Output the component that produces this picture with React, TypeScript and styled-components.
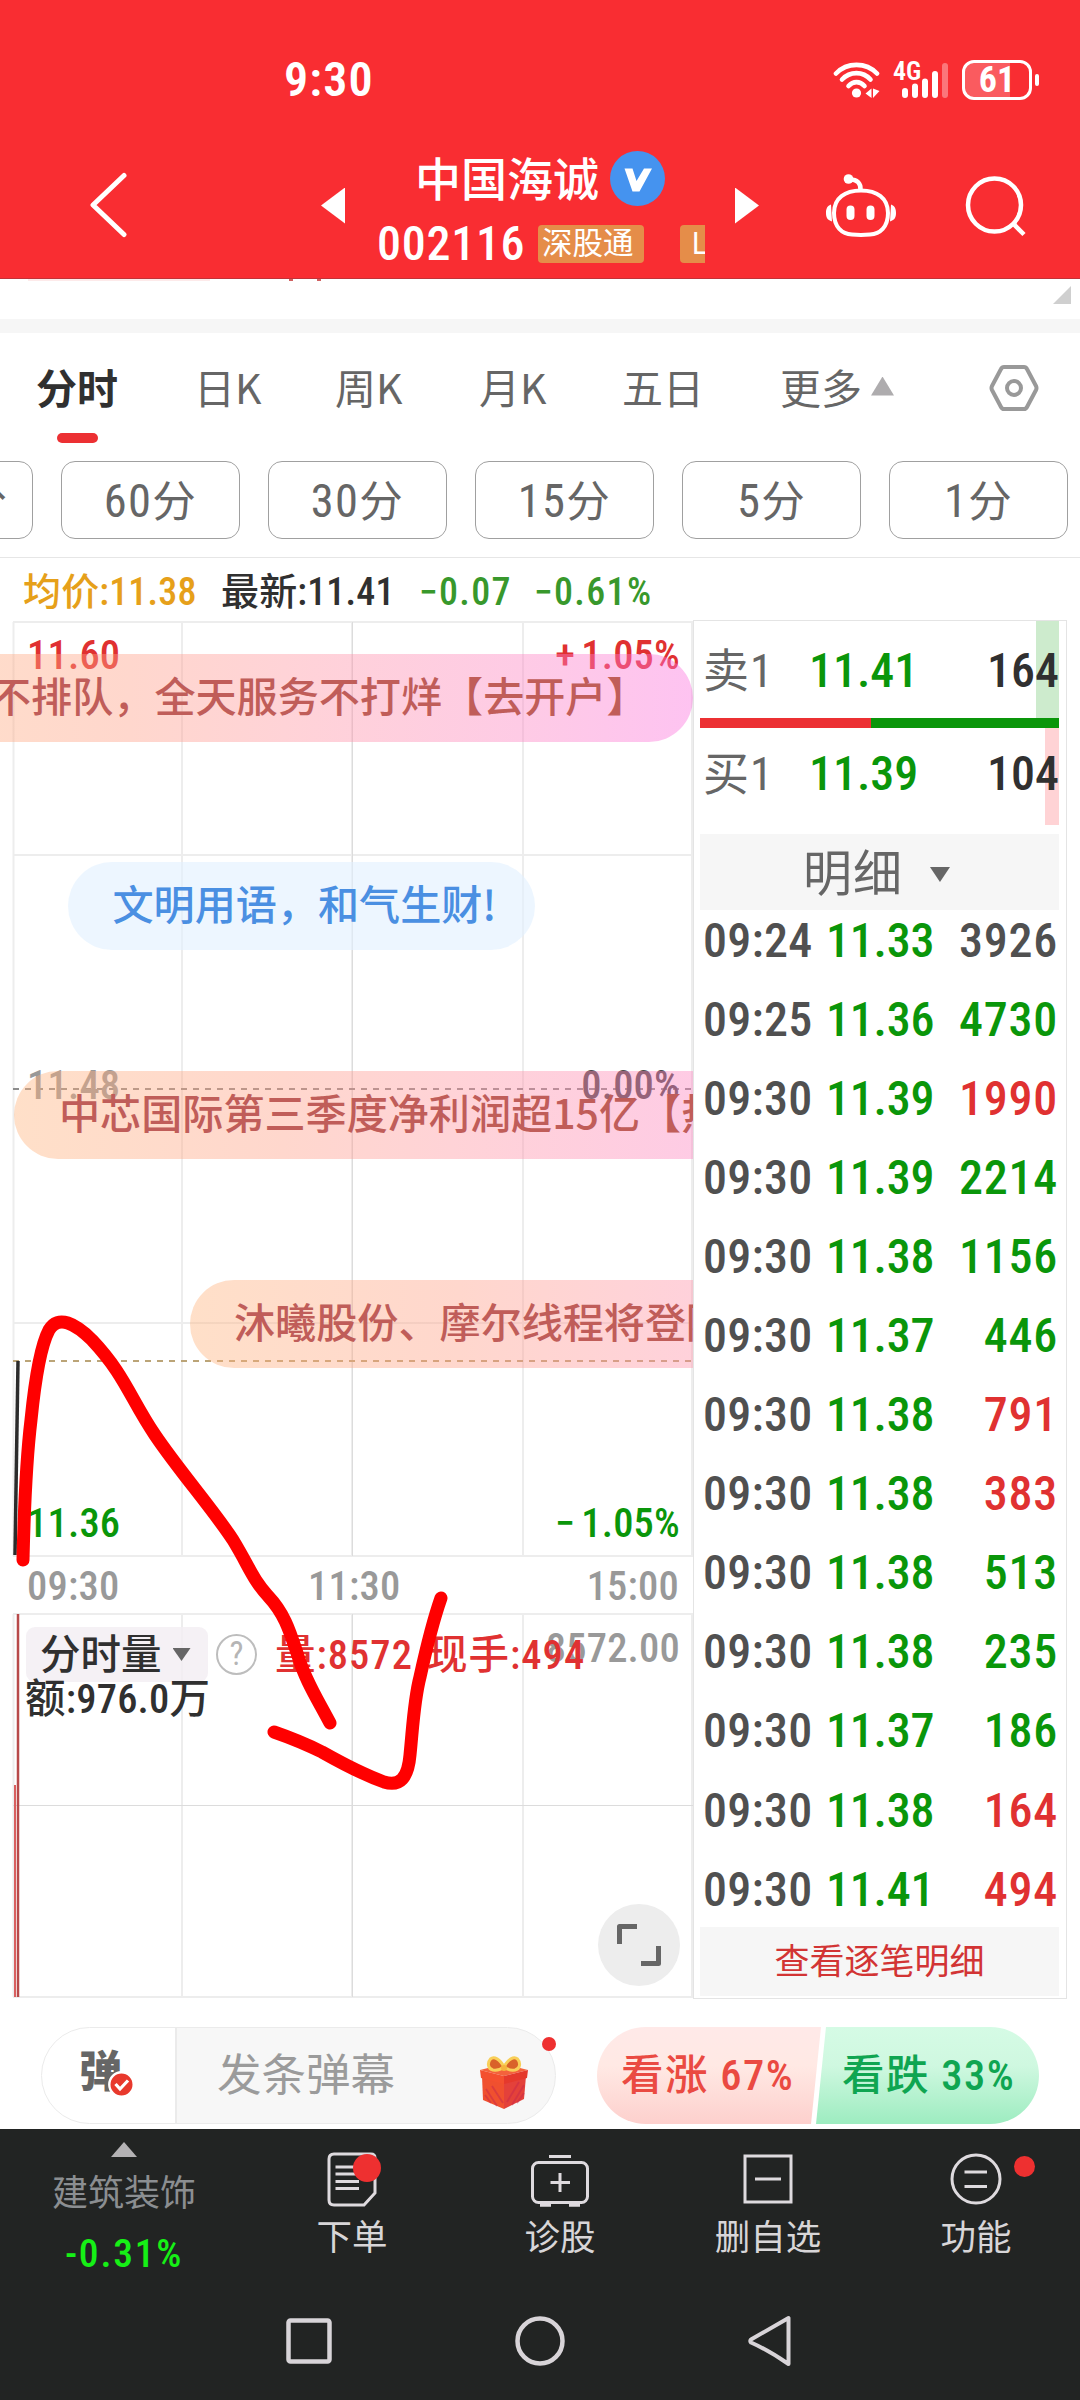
import React from "react";
import styled, { createGlobalStyle } from "styled-components";

const Global = createGlobalStyle`
  * { box-sizing: border-box; }
  body { margin: 0; background: #fff; }
  svg { display: block; flex: none; }
`;

const RED = "#e03131";
const GREEN = "#0a960a";
const DARK = "#303030";

const Screen = styled.div`
  width: 1080px;
  height: 2400px;
  overflow: hidden;
  position: relative;
  display: flex;
  flex-direction: column;
  background: #fff;
  color: ${DARK};
  font-family: "Roboto Condensed", "Noto Sans CJK SC", sans-serif;
  letter-spacing: 0.01em;
  white-space: nowrap;
`;

/* ---------- header ---------- */

const Header = styled.header`
  height: 279px;
  background: #f92d32;
  color: #fff;
  border-bottom: 1px solid #c23238;
`;

const StatusBar = styled.div`
  height: 118px;
  padding: 42px 41px 0 284px;
  display: flex;
  align-items: center;
  justify-content: space-between;
`;

const Clock = styled.span`
  font-size: 48px;
  line-height: 56px;
  font-weight: 600;
  letter-spacing: 0.025em;
`;

const StatusIcons = styled.div`
  display: flex;
  align-items: center;
`;

const Network = styled.div`
  position: relative;
  width: 56px;
  height: 38px;
  margin-left: 13px;
`;

const NetworkLabel = styled.span`
  position: absolute;
  left: -1px;
  top: -3px;
  font-size: 26px;
  line-height: 26px;
  font-weight: 600;
  letter-spacing: 0;
`;

const Battery = styled.div`
  width: 70px;
  height: 40px;
  margin-left: 12px;
  border: 3px solid #fff;
  border-radius: 12px;
  display: flex;
  align-items: center;
  justify-content: center;
  font-size: 36px;
  line-height: 34px;
  font-weight: 700;
  background: linear-gradient(90deg, rgba(255, 255, 255, 0.22) 70%, transparent 70%);
`;

const BatteryTip = styled.div`
  width: 4px;
  height: 12px;
  margin-left: 3px;
  border-radius: 2px;
  background: #fff;
`;

const TitleBar = styled.div`
  height: 160px;
  padding: 15px 0 0 88px;
  display: flex;
  align-items: center;
`;

const Arrow = styled.div<{ $dir: "left" | "right"; $gap?: number }>`
  width: 24px;
  height: 36px;
  margin-left: ${(p) => p.$gap ?? 0}px;
  background: #fff;
  clip-path: ${(p) => (p.$dir === "left" ? "polygon(0 50%, 100% 0, 100% 100%)" : "polygon(0 0, 100% 50%, 0 100%)")};
`;

const Title = styled.div`
  width: 390px;
  margin-top: 11px;
`;

const NameRow = styled.div`
  height: 58px;
  padding-left: 70px;
  display: flex;
  align-items: center;
  gap: 11px;
  font-size: 46px;
  font-weight: 500;
  letter-spacing: 0;
`;

const Name = styled.span`
  margin-top: -6px;
`;

const CodeRow = styled.div`
  height: 58px;
  width: 328px;
  margin: 7px 0 0 32px;
  overflow: hidden;
  display: flex;
  align-items: center;
`;

const Code = styled.span`
  flex: none;
  width: 161px;
  font-size: 48px;
  line-height: 58px;
  font-weight: 500;
  letter-spacing: 0.015em;
`;

const Badge = styled.span<{ $w: number; $gap?: number; $pad: number }>`
  flex: none;
  width: ${(p) => p.$w}px;
  height: 38px;
  margin-left: ${(p) => p.$gap ?? 0}px;
  padding-left: ${(p) => p.$pad}px;
  border-radius: 4px;
  background: #e58d49;
  font-size: 30.5px;
  line-height: 37px;
  letter-spacing: 0;
`;

const HeaderIcon = styled.div<{ $gap: number }>`
  margin-left: ${(p) => p.$gap}px;
`;

/* ---------- tabs ---------- */

const Peek = styled.div`
  height: 54px;
  border-bottom: 14px solid #f6f6f6;
  display: flex;
  justify-content: flex-end;
  padding: 7px 9px 0 0;
  background:
    linear-gradient(#d06060, #d06060) no-repeat 289px 0 / 4px 2px,
    linear-gradient(#d06060, #d06060) no-repeat 317px 0 / 4px 2px,
    linear-gradient(#fdeaea, #fdeaea) no-repeat 28px 0 / 182px 2px;
`;

const Corner = styled.div`
  width: 18px;
  height: 18px;
  background: #cfcfcf;
  clip-path: polygon(100% 0, 100% 100%, 0 100%);
`;

const Tabs = styled.nav`
  height: 112px;
  padding-left: 36px;
  display: flex;
  color: #666;
  font-family: "Noto Sans CJK SC", sans-serif;
  font-size: 41px;
  line-height: 104px;
  letter-spacing: 0;
`;

const Tab = styled.div<{ $w: number; $active?: boolean }>`
  width: ${(p) => p.$w}px;
  height: 112px;
  padding-bottom: 6px;
  position: relative;
  display: flex;
  align-items: center;
  gap: 9px;
  ${(p) => p.$active && `color: ${DARK}; font-weight: 700;`}
`;

const SettingsTab = styled(Tab)`
  padding-bottom: 2px;
`;

const Underline = styled.i`
  position: absolute;
  left: 21px;
  bottom: 2px;
  width: 41px;
  height: 10px;
  border-radius: 5px;
  background: #ec3033;
`;

const Caret = styled.i<{ $w: number; $h: number; $c: string; $up?: boolean }>`
  flex: none;
  width: ${(p) => p.$w}px;
  height: ${(p) => p.$h}px;
  background: ${(p) => p.$c};
  clip-path: ${(p) => (p.$up ? "polygon(50% 0, 100% 100%, 0 100%)" : "polygon(0 0, 100% 0, 50% 100%)")};
`;

const Chips = styled.div`
  height: 112px;
  margin-left: -146px;
  padding-top: 16px;
  display: flex;
  gap: 28px;
`;

const Chip = styled.div`
  flex: none;
  width: 179px;
  height: 78px;
  border: 1.5px solid #a0a0a0;
  border-radius: 14px;
  text-align: center;
  font-size: 43.5px;
  line-height: 79px;
  color: #666;
  letter-spacing: 0.03em;

  &:first-child {
    padding-left: 12px;
  }
`;

const ChipNumber = styled.span`
  font-size: 46.5px;
`;

const Quote = styled.div`
  height: 63px;
  border-top: 1px solid #e6e6e6;
  padding: 5px 23px 0;
  display: flex;
  align-items: center;
  font-size: 38px;
  font-weight: 500;
  line-height: 60px;
`;

const QuoteItem = styled.span<{ $c: string; $w: number; $spread?: boolean }>`
  width: ${(p) => p.$w}px;
  color: ${(p) => p.$c};
  ${(p) => p.$spread && "letter-spacing: 0.035em;"}
`;

/* ---------- market area ---------- */

const Market = styled.main`
  height: 1379px;
  display: flex;
  font-weight: 500;
`;

const ChartColumn = styled.section`
  position: relative;
  width: 693px;
  height: 1379px;
  overflow: hidden;
`;

const Plot = styled.svg`
  position: absolute;
  inset: 0;
`;

const Label = styled.span<{ $y: number; $c: string; $x?: number; $r?: number }>`
  position: absolute;
  top: ${(p) => p.$y - 25}px;
  ${(p) => (p.$r !== undefined ? `right: ${p.$r}px;` : `left: ${p.$x}px;`)}
  font-size: 40.5px;
  line-height: 50px;
  letter-spacing: 0.005em;
  color: ${(p) => p.$c};
`;

const Sign = styled.span`
  margin-right: 6px;
`;

const Bullet = styled.div<{ $x: number; $y: number; $w: number; $pad: number; $blue?: boolean }>`
  position: absolute;
  left: ${(p) => p.$x}px;
  top: ${(p) => p.$y}px;
  width: ${(p) => p.$w}px;
  height: 88px;
  padding-left: ${(p) => p.$pad}px;
  border-radius: 44px;
  font-family: "Noto Sans CJK SC", sans-serif;
  font-size: 41.1px;
  line-height: 81px;
  letter-spacing: 0;
  color: ${(p) => (p.$blue ? "#4a8fe2" : "#c05d59")};
  background: ${(p) =>
    p.$blue
      ? "rgba(225, 240, 255, 0.6)"
      : "linear-gradient(90deg, rgba(255,180,125,.42) 0%, rgba(255,160,135,.42) 30%, rgba(255,150,160,.42) 50%, rgba(253,130,195,.42) 80%, rgba(252,112,222,.42) 100%)"};
`;

const VolumeBar = styled.div`
  position: absolute;
  left: 26px;
  top: 1007px;
  display: flex;
  align-items: center;
  height: 55px;
  font-size: 40.5px;
  line-height: 50px;
`;

const Selector = styled.div`
  width: 182px;
  height: 55px;
  padding-left: 14px;
  border-radius: 9px;
  display: flex;
  align-items: center;
  gap: 11px;
  background: rgba(243, 238, 243, 0.8);
  letter-spacing: 0;
`;

const Help = styled.div`
  width: 41px;
  height: 41px;
  margin: 0 18px 0 8px;
  border: 2.5px solid #bdbdbd;
  border-radius: 50%;
  text-align: center;
  font-size: 33px;
  font-weight: 400;
  line-height: 36px;
  color: #b5b5b5;
`;

const VolumeValue = styled.span<{ $w: number }>`
  width: ${(p) => p.$w}px;
  letter-spacing: 0.025em;
  color: ${RED};
`;

const Expand = styled.div`
  position: absolute;
  left: 598px;
  top: 1284px;
  width: 82px;
  height: 82px;
  border-radius: 50%;
  background: #ededed;
  display: grid;
  place-items: center;
`;

const Book = styled.aside`
  width: 374px;
  height: 1379px;
  padding: 0 7px 0 6px;
  border: 1px solid #e4e4e4;
  display: flex;
  flex-direction: column;
`;

const Level = styled.div<{ $side: "sell" | "buy" }>`
  height: ${(p) => (p.$side === "sell" ? 97 : 106)}px;
  padding: ${(p) => (p.$side === "sell" ? "2px 0 0 3px" : "0 0 14px 3px")};
  display: flex;
  align-items: center;
  font-size: 48px;
  line-height: 60px;
  letter-spacing: 0;
  background: linear-gradient(
      ${(p) => (p.$side === "sell" ? "#cdebcd, #cdebcd" : "#ffd3d5, #ffd3d5")}
    )
    no-repeat right top / ${(p) => (p.$side === "sell" ? "23px 100%" : "14px 97px")};
`;

const LevelName = styled.span`
  width: 106px;
  color: #666;
  font-size: 46px;
  font-weight: 400;
  letter-spacing: 0.02em;
`;

const LevelPrice = styled.span`
  flex: 1;
  color: ${GREEN};
`;

const Ratio = styled.div`
  height: 10px;
  background: linear-gradient(90deg, #ec3033 47.5%, ${GREEN} 47.5%);
`;

const DetailHead = styled.div`
  height: 76px;
  padding: 5px 0 0 103px;
  display: flex;
  align-items: center;
  gap: 27px;
  background: #f6f6f6;
  color: #666;
  font-size: 49px;
  font-weight: 400;
  line-height: 70px;
  letter-spacing: 0.02em;
`;

const Ticks = styled.div`
  height: 1026px;
  margin-top: -9px;
  flex: none;
`;

const Tick = styled.div`
  height: 79.05px;
  padding: 0 1px 0 3px;
  display: flex;
  align-items: center;
  font-size: 48px;
  line-height: 79px;
  letter-spacing: 0.005em;
`;

const TickTime = styled.span`
  width: 123px;
  color: #505050;
`;

const TickPrice = styled.span`
  letter-spacing: -0.005em;
  color: ${GREEN};
`;

const TickVolume = styled.span<{ $c: string }>`
  flex: 1;
  text-align: right;
  letter-spacing: 0.015em;
  color: ${(p) => p.$c};
`;

const AllTicks = styled.div`
  height: 69px;
  background: #f6f6f6;
  color: #d23434;
  text-align: center;
  font-size: 35px;
  font-weight: 400;
  line-height: 71px;
  letter-spacing: 0;
`;

/* ---------- comment bar ---------- */

const CommentBar = styled.div`
  height: 130px;
  padding: 28px 41px 0;
  display: flex;
  justify-content: space-between;
`;

const Compose = styled.div`
  position: relative;
  width: 515px;
  height: 97px;
  border: 1px solid #ebebeb;
  border-radius: 49px;
  background: linear-gradient(90deg, #fff 133px, #ebebeb 133px, #ebebeb 135px, #f7f7f7 135px);
  display: flex;
  align-items: center;
  font-size: 44.5px;
  color: #9b9b9b;
  letter-spacing: 0;
`;

const Toggle = styled.div`
  position: relative;
  width: 135px;
  padding-left: 37px;
  margin-top: -7px;
  font-size: 43px;
  line-height: 60px;
  font-weight: 900;
  color: #666;
`;

const CheckMark = styled.svg`
  position: absolute;
  left: 66px;
  top: 29px;
`;

const Placeholder = styled.span`
  width: 261px;
  padding-left: 40px;
  line-height: 90px;
`;

const Gift = styled.svg`
  margin: 14px 0 0 41px;
`;

const Dot = styled.i<{ $x: number; $y: number; $s: number }>`
  position: absolute;
  left: ${(p) => p.$x}px;
  top: ${(p) => p.$y}px;
  width: ${(p) => p.$s}px;
  height: ${(p) => p.$s}px;
  border-radius: 50%;
  background: #ee3030;
`;

const Votes = styled.div`
  width: 442px;
  height: 97px;
  border-radius: 49px;
  overflow: hidden;
  display: flex;
  font-size: 42.5px;
  font-weight: 500;
  line-height: 97px;
  letter-spacing: 0.035em;
`;

const Up = styled.div`
  width: 224px;
  padding-left: 24px;
  color: #ea4a42;
  background: linear-gradient(#ffe9e8, #ffe9e4 40%, #fdd0cd);
  clip-path: polygon(0 0, 100% 0, 214px 100%, 0 100%);
`;

const Down = styled.div`
  width: 223px;
  margin-left: -5px;
  padding-left: 26px;
  color: #0fa551;
  background: linear-gradient(#d5fbe5, #cff8e0 40%, #9decc0);
  clip-path: polygon(10px 0, 100% 0, 100% 100%, 0 100%);
`;

/* ---------- bottom ---------- */

const Footer = styled.footer`
  flex: 1;
  background: #222423;
  color: #d8d6d8;
`;

const Actions = styled.div`
  height: 142px;
  display: flex;
`;

const Sector = styled.div`
  width: 248px;
  padding-top: 13px;
  display: flex;
  flex-direction: column;
  align-items: center;
  font-size: 36px;
  line-height: 60px;
  color: #8b8e91;
  letter-spacing: 0;
`;

const SectorName = styled.span`
  margin-top: 7px;
`;

const SectorChange = styled.span`
  font-size: 39.5px;
  font-weight: 500;
  color: #16f016;
  letter-spacing: 0.045em;
`;

const Action = styled.div`
  position: relative;
  width: 208px;
  padding-top: 20px;
  display: flex;
  flex-direction: column;
  align-items: center;
  font-size: 35.5px;
  line-height: 58px;
  letter-spacing: 0;
`;

const SystemNav = styled.div`
  height: 129px;
  padding: 40px 286px 0;
  display: flex;
  justify-content: space-between;
`;

const Scribble = styled.svg`
  position: absolute;
  left: 0;
  top: 1300px;
  pointer-events: none;
`;

const ticks: [string, string, string, string][] = [
  ["09:24", "11.33", "3926", "#505050"],
  ["09:25", "11.36", "4730", GREEN],
  ["09:30", "11.39", "1990", RED],
  ["09:30", "11.39", "2214", GREEN],
  ["09:30", "11.38", "1156", GREEN],
  ["09:30", "11.37", "446", GREEN],
  ["09:30", "11.38", "791", RED],
  ["09:30", "11.38", "383", RED],
  ["09:30", "11.38", "513", GREEN],
  ["09:30", "11.38", "235", GREEN],
  ["09:30", "11.37", "186", GREEN],
  ["09:30", "11.38", "164", RED],
  ["09:30", "11.41", "494", RED],
];

const columns = [13.5, 182, 352, 523, 692];

function WifiIcon() {
  return (
    <svg width="48" height="38" viewBox="0 0 48 38" fill="none" stroke="#fff" strokeWidth="4.6" strokeLinecap="round">
      <path d="M3 12.5C14 1 33 1 44 12.5" />
      <path d="M9 18.5C17 10 30 10 37.5 18.5" />
      <path d="M15.5 25C20 19.8 27 19.8 31.5 25" />
      <circle cx="23.5" cy="32" r="4.6" fill="#fff" stroke="none" />
      <path d="M38.5 27.5v9.5l-6-4.500zM40 27.5l6.500 2.500-6.500 7z" fill="#fff" stroke="none" />
    </svg>
  );
}

export default function App() {
  return (
    <Screen>
      <Global />
      <Header>
        <StatusBar>
          <Clock>9:30</Clock>
          <StatusIcons>
            <WifiIcon />
            <Network>
              <NetworkLabel>4G</NetworkLabel>
              <svg width="56" height="38" stroke="#fff" strokeWidth="6" strokeLinecap="round">
                <path d="M11 30V34M21 25.5V34M31 20.5V34M41 13V34" />
                <path d="M51 5V34" opacity="0.35" />
              </svg>
            </Network>
            <Battery>61</Battery>
            <BatteryTip />
          </StatusIcons>
        </StatusBar>
        <TitleBar>
          <svg width="42" height="68" viewBox="0 0 42 68" fill="none" stroke="#fff" strokeWidth="5" strokeLinecap="round" strokeLinejoin="round">
            <path d="M36 3.500L5 33L36 62.500" />
          </svg>
          <Arrow $dir="left" $gap={191} />
          <Title>
            <NameRow>
              <Name>中国海诚</Name>
              <svg width="55" height="55" viewBox="0 0 55 55">
                <circle cx="27.5" cy="27.5" r="27.5" fill="#4593ef" />
                <path d="M14.500 17.500H22.500L26.500 30L34 17.500H42L29.500 40.500H22.500Z" fill="#fff" />
              </svg>
            </NameRow>
            <CodeRow>
              <Code>002116</Code>
              <Badge $w={106} $pad={4}>深股通</Badge>
              <Badge $w={60} $gap={36} $pad={12}>L</Badge>
            </CodeRow>
          </Title>
          <Arrow $dir="right" />
          <HeaderIcon $gap={65}>
            <svg width="74" height="66" viewBox="0 0 74 66" fill="none" stroke="#fff" strokeWidth="4">
              <path d="M37 17.500C53 17.500 64 25 64 40C64 54 56 61 46 61.500C40 62 34 62 28 61.500C18 61 10 54 10 40C10 25 21 17.500 37 17.500Z" />
              <path d="M36.500 17C37 10 33 6.500 26 6.500" strokeWidth="4.5" />
              <circle cx="24.5" cy="6" r="4.8" fill="#fff" stroke="none" />
              <path d="M7 31.500C2.500 33 2 37 2 40C2 44 3 47 8 48.500ZM67 31.500C71.500 33 72 37 72 40C72 44 71 47 66 48.500Z" fill="#fff" stroke="none" />
              <path d="M26.500 36.500V43M46.500 36.500V43" strokeWidth="8" strokeLinecap="round" />
            </svg>
          </HeaderIcon>
          <HeaderIcon $gap={67}>
            <svg width="62" height="62" viewBox="0 0 62 62" fill="none" stroke="#fff" strokeWidth="4.5">
              <circle cx="29.5" cy="30" r="26.5" />
              <path d="M48.500 49L59 59.500" />
            </svg>
          </HeaderIcon>
        </TitleBar>
      </Header>

      <Peek>
        <Corner />
      </Peek>

      <Tabs>
        <Tab $w={158} $active>
          分时
          <Underline />
        </Tab>
        <Tab $w={141}>日K</Tab>
        <Tab $w={144}>周K</Tab>
        <Tab $w={143}>月K</Tab>
        <Tab $w={158}>五日</Tab>
        <Tab $w={209}>
          更多
          <Caret $w={23} $h={19} $c="#aeacae" $up />
        </Tab>
        <SettingsTab $w={60}>
          <svg width="50" height="48" viewBox="0 0 50 48" fill="none" stroke="#999" strokeWidth="4">
            <path d="M15 3H35Q37 3 38 5L47 22Q48 24 47 26L38 43Q37 45 35 45H15Q13 45 12 43L3 26Q2 24 3 22L12 5Q13 3 15 3Z" />
            <circle cx="25" cy="24" r="7" />
          </svg>
        </SettingsTab>
      </Tabs>

      <Chips>
        {["120", "60", "30", "15", "5", "1"].map((n) => (
          <Chip key={n}>
            <ChipNumber>{n}</ChipNumber>分
          </Chip>
        ))}
      </Chips>

      <Quote>
        <QuoteItem $c="#e6a01a" $w={198}>均价:11.38</QuoteItem>
        <QuoteItem $c={DARK} $w={198}>最新:11.41</QuoteItem>
        <QuoteItem $c="#38982c" $w={115} $spread>−0.07</QuoteItem>
        <QuoteItem $c="#38982c" $w={130} $spread>−0.61%</QuoteItem>
      </Quote>

      <Market>
        <ChartColumn>
          <Plot width="693" height="1379">
            <g stroke="#ededed" strokeWidth="2">
              {[2, 235, 703, 936, 994, 1377].map((y) => (
                <path key={y} d={`M13 ${y}H693`} />
              ))}
              {columns.map((x) => (
                <path key={x} d={`M${x} 2V936M${x} 994V1377`} />
              ))}
            </g>
            <path d="M13 1185.500H693M352.500 2V936M352.500 994V1377" stroke="#dcdcdc" />
            <path d="M13 469H693" stroke="#8c8c8c" strokeWidth="2" strokeDasharray="6 6" />
            <path d="M13 741H693" stroke="#bba477" strokeWidth="2" strokeDasharray="6 6" />
            <path d="M18 741L15 935" stroke="#2b2b2b" strokeWidth="3.5" />
            <path d="M18 994V1377" stroke="#b84a4a" strokeWidth="2.5" />
            <path d="M15 1165V1377" stroke="#d96060" strokeWidth="2" />
          </Plot>

          <Label $x={27} $y={35} $c={RED}>11.60</Label>
          <Label $r={13} $y={35} $c={RED}><Sign>+</Sign>1.05%</Label>
          <Label $x={27} $y={465} $c="#999">11.48</Label>
          <Label $r={13} $y={465} $c="#4c484c">0.00%</Label>
          <Label $x={27} $y={903} $c={GREEN}>11.36</Label>
          <Label $r={13} $y={903} $c={GREEN}><Sign>−</Sign>1.05%</Label>
          <Label $x={27} $y={966} $c="#999">09:30</Label>
          <Label $x={308} $y={966} $c="#999">11:30</Label>
          <Label $r={14} $y={966} $c="#999">15:00</Label>
          <Label $r={13} $y={1028} $c="#999">8572.00</Label>

          <Bullet $x={-120} $y={34} $w={813} $pad={110}>不排队，全天服务不打烊【去开户】</Bullet>
          <Bullet $x={67.5} $y={242} $w={467} $pad={45} $blue>文明用语，和气生财!</Bullet>
          <Bullet $x={14} $y={451} $w={880} $pad={45}>中芯国际第三季度净利润超15亿【热</Bullet>
          <Bullet $x={190} $y={660} $w={880} $pad={44}>沐曦股份、摩尔线程将登陆</Bullet>

          <VolumeBar>
            <Selector>
              分时量
              <Caret $w={18} $h={13} $c="#666" />
            </Selector>
            <Help>?</Help>
            <VolumeValue $w={152}>量:8572</VolumeValue>
            <VolumeValue $w={165}>现手:494</VolumeValue>
          </VolumeBar>
          <Label $x={25} $y={1079} $c={DARK}>额:976.0万</Label>

          <Expand>
            <svg width="46" height="46" viewBox="0 0 46 46" fill="none" stroke="#666" strokeWidth="5" strokeLinejoin="round">
              <path d="M3.500 22V4.500H21M42.500 24V41.500H25" />
            </svg>
          </Expand>
        </ChartColumn>

        <Book>
          <Level $side="sell">
            <LevelName>卖1</LevelName>
            <LevelPrice>11.41</LevelPrice>
            164
          </Level>
          <Ratio />
          <Level $side="buy">
            <LevelName>买1</LevelName>
            <LevelPrice>11.39</LevelPrice>
            104
          </Level>
          <DetailHead>
            明细
            <Caret $w={20} $h={15} $c="#666" />
          </DetailHead>
          <Ticks>
            {ticks.map(([time, price, volume, color], i) => (
              <Tick key={i}>
                <TickTime>{time}</TickTime>
                <TickPrice>{price}</TickPrice>
                <TickVolume $c={color}>{volume}</TickVolume>
              </Tick>
            ))}
          </Ticks>
          <AllTicks>查看逐笔明细</AllTicks>
        </Book>
      </Market>

      <CommentBar>
        <Compose>
          <Toggle>
            弹
            <CheckMark width="27" height="27" viewBox="0 0 27 27">
              <circle cx="13.5" cy="13.5" r="12.2" fill="#e8392d" stroke="#fff" strokeWidth="2.4" />
              <path d="M7.500 13L12 18L20 9.500" fill="none" stroke="#fff" strokeWidth="3.2" />
            </CheckMark>
          </Toggle>
          <Placeholder>发条弹幕</Placeholder>
          <Gift width="50" height="54" viewBox="0 0 50 54">
            <path d="M3 20L25 25V53L4 44Z" fill="#f0502f" />
            <path d="M25 25L47 20L45 43L25 53Z" fill="#e4413a" />
            <path d="M7 33L18 50M6 39L12 47M13 30L24 47M40 26L28 46M45 29L33 49M45 37L38 47" stroke="#c9294a" strokeWidth="1.8" opacity="0.5" />
            <path d="M1 14L25 8L49 14L25 20Z" fill="#f4623c" />
            <path d="M1 14L25 20V28L2 22Z" fill="#f4502f" />
            <path d="M49 14L25 20V28L48 22Z" fill="#e5392c" />
            <g fill="#d9622a" stroke="#f8cf58" strokeWidth="3">
              <path d="M25 11C21 3 15 0 11.500 3C8 7 9 13 14 14C18 14.500 22 13.500 25 11Z" />
              <path d="M25 11C29 3 35 0 38.500 3C42 7 41 13 36 14C32 14.500 28 13.500 25 11Z" />
            </g>
            <circle cx="25" cy="12" r="3" fill="#f5b53d" />
          </Gift>
          <Dot $x={500} $y={9} $s={14} />
        </Compose>
        <Votes>
          <Up>看涨 67%</Up>
          <Down>看跌 33%</Down>
        </Votes>
      </CommentBar>

      <Footer>
        <Actions>
          <Sector>
            <Caret $w={26} $h={15} $c="#b4b2b4" $up />
            <SectorName>建筑装饰</SectorName>
            <SectorChange>-0.31%</SectorChange>
          </Sector>
          <Action>
            <svg width="54" height="60" viewBox="0 0 54 60" fill="none" stroke="#dedade" strokeWidth="3">
              <path d="M9 5H46Q50 5 50 9V44L39 56H9Q4 56 4 51V10Q4 5 9 5Z" />
              <path d="M10.500 18H34M10.500 25H34M10.500 32.500H34M10.500 39.500H34" />
            </svg>
            下单
            <Dot $x={105} $y={25} $s={28} />
          </Action>
          <Action>
            <svg width="60" height="60" viewBox="0 0 60 60" fill="none" stroke="#dedade" strokeWidth="3">
              <rect x="2.5" y="13.5" width="55" height="40" rx="6" />
              <path d="M19 7.500H41M20.500 33.500H40M30 24V43" />
              <path d="M10 56H21M39 56H50" strokeWidth="3.5" />
            </svg>
            诊股
          </Action>
          <Action>
            <svg width="54" height="60" viewBox="0 0 54 60" fill="none" stroke="#dedade" strokeWidth="3">
              <path d="M4 7H50V53H4ZM14 30H40" />
            </svg>
            删自选
          </Action>
          <Action>
            <svg width="60" height="60" viewBox="0 0 60 60" fill="none" stroke="#dedade" strokeWidth="3">
              <circle cx="30" cy="30" r="24" />
              <path d="M18.500 23H41M18.500 37.500H41" />
            </svg>
            功能
            <Dot $x={142} $y={27} $s={21} />
          </Action>
        </Actions>
        <SystemNav>
          <svg width="46" height="60" viewBox="0 0 46 60" fill="none" stroke="#d8d4d8" strokeWidth="4.5">
            <rect x="2.5" y="9.5" width="41" height="41" rx="2" />
          </svg>
          <svg width="50" height="60" viewBox="0 0 50 60" fill="none" stroke="#d8d4d8" strokeWidth="4.5">
            <circle cx="25" cy="30" r="22.5" />
          </svg>
          <svg width="46" height="60" viewBox="0 0 46 60" fill="none" stroke="#d8d4d8" strokeWidth="4" strokeLinejoin="round">
            <path d="M40.500 7V53Q20 39 3 31.500Q1.500 30 3 28.500Z" />
          </svg>
        </SystemNav>
      </Footer>

      <Scribble width="470" height="520" viewBox="0 1300 470 520" fill="none" stroke="#ff0000" strokeWidth="13" strokeLinecap="round" strokeLinejoin="round">
        <path d="M23 1560C24 1520 25 1470 31 1420C35 1380 41 1345 49 1330C58 1314 76 1324 92 1340C125 1375 130 1398 155 1435C180 1472 212 1508 233 1540C250 1568 252 1578 268 1596C285 1614 290 1632 298 1656C305 1680 318 1700 330 1723" />
        <path d="M274 1732Q300 1741 322 1752C345 1765 362 1774 384 1782C400 1787 408 1778 410 1755C413 1725 414 1700 420 1677C427 1645 434 1618 441 1598" />
      </Scribble>
    </Screen>
  );
}
